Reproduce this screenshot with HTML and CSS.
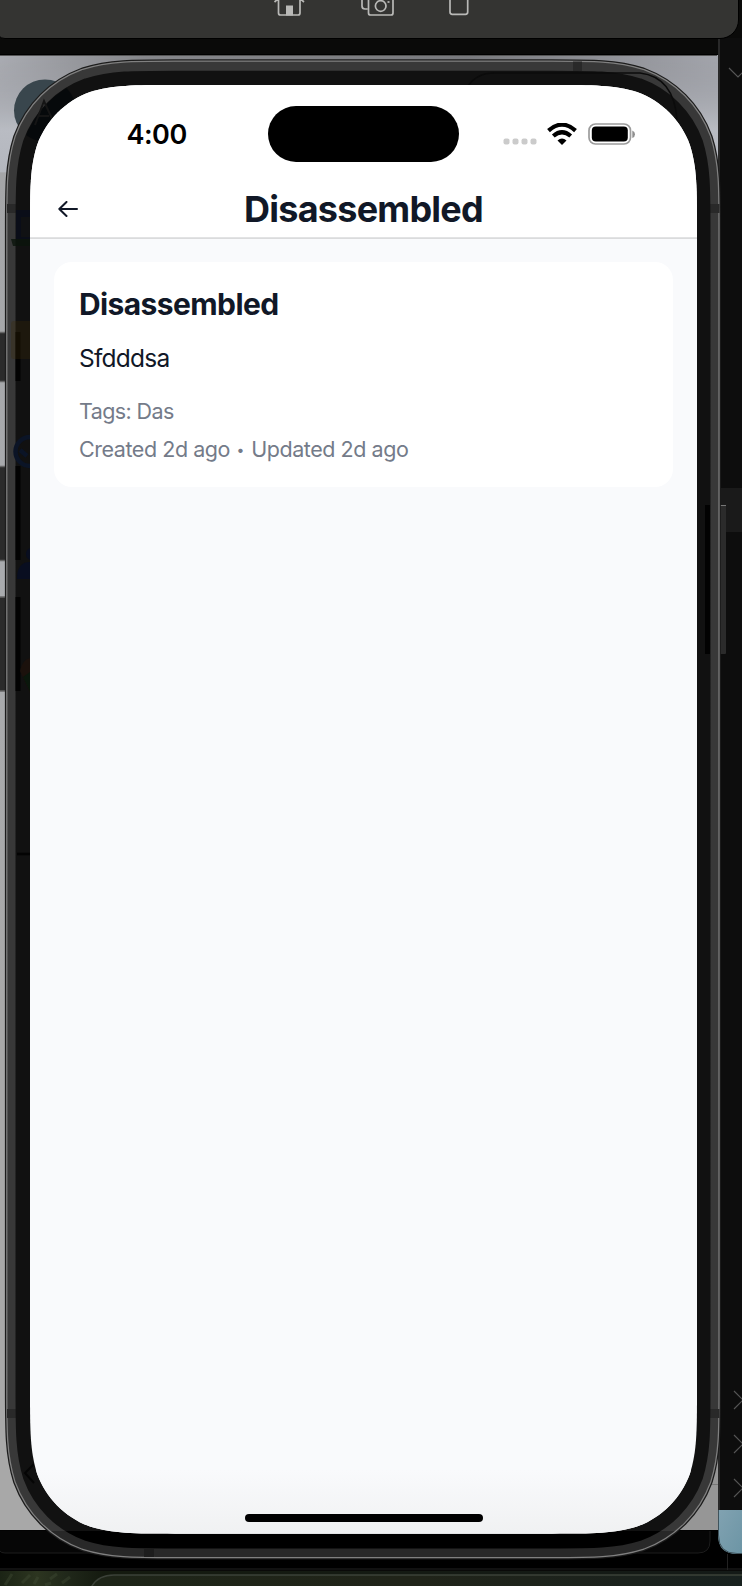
FILE: index.html
```html
<!DOCTYPE html>
<html lang="en">
<head>
<meta charset="utf-8">
<title>Disassembled</title>
<link rel="stylesheet" href="styles.css">
</head>
<body>
<div class="desktop">
  <svg class="backdrop" width="742" height="1586" viewBox="0 0 742 1586" aria-hidden="true">
    <defs>
      <linearGradient id="wall" x2="0" y2="1"><stop offset="0" stop-color="#929399"/><stop offset=".05" stop-color="#b9bcc3"/><stop offset=".079" stop-color="#b4b7be"/><stop offset=".08" stop-color="#a4a5a7"/><stop offset=".35" stop-color="#a9abae"/><stop offset=".65" stop-color="#a8a8a8"/><stop offset="1" stop-color="#a8a8a8"/></linearGradient>
      <linearGradient id="top"><stop offset="0" stop-color="#aaacb2"/><stop offset=".2" stop-color="#85868a"/><stop offset=".65" stop-color="#77787c"/><stop offset="1" stop-color="#a3a5ac"/></linearGradient>
      <linearGradient id="fadeDown" x2="0" y2="1"><stop offset="0" stop-color="#fff"/><stop offset="1" stop-color="#000"/></linearGradient>
      <mask id="topMask"><rect y="55" width="718" height="75" fill="url(#fadeDown)"/></mask>
      <linearGradient id="ring" gradientUnits="userSpaceOnUse" x1="0" y1="0" x2="0" y2="1586"><stop offset=".9647" stop-color="#383838"/><stop offset=".9647" stop-color="#282828"/></linearGradient>
      <linearGradient id="bezel" gradientUnits="userSpaceOnUse" x1="0" y1="0" x2="0" y2="1586"><stop offset=".9647" stop-color="#111"/><stop offset=".9647" stop-color="#000"/></linearGradient>
      <linearGradient id="grass"><stop offset="0" stop-color="#1b2415"/><stop offset=".05" stop-color="#2c3520"/><stop offset=".09" stop-color="#20281a"/><stop offset=".14" stop-color="#141a0f"/><stop offset="1" stop-color="#141a17"/></linearGradient>
      <linearGradient id="glass"><stop offset="0" stop-color="#1e2518"/><stop offset=".5" stop-color="#202419"/><stop offset="1" stop-color="#18211f"/></linearGradient>
      <linearGradient id="blue" x2="1" y2="1"><stop offset="0" stop-color="#81a2b1"/><stop offset="1" stop-color="#6c95a5"/></linearGradient>
      <linearGradient id="fade" gradientUnits="userSpaceOnUse" x1="0" y1="1470" x2="0" y2="1534"><stop offset="0" stop-color="#f9fafc"/><stop offset="1" stop-color="#f0f1f2"/></linearGradient>
      <path id="outline" d="M175 85H552C593.6 85 614.5 85 637 92.1C661.6 101.1 680.9 120.4 689.9 145C697 167.5 697 188.4 697 230V1388.7C697 1430.3 697 1451.2 689.9 1473.7C680.9 1498.3 661.6 1517.6 637 1526.6C614.5 1533.7 593.6 1533.7 552 1533.7H175C133.4 1533.7 112.5 1533.7 90 1526.6C65.4 1517.6 46.1 1498.3 37.1 1473.7C30 1451.2 30 1430.3 30 1388.7V230C30 188.4 30 167.5 37.1 145C46.1 120.4 65.4 101.1 90 92.1C112.5 85 133.4 85 175 85Z"/>
      <clipPath id="screen"><use href="#outline"/></clipPath>
      <clipPath id="avatar"><circle cx="45" cy="110.500" r="31"/></clipPath>
    </defs>
    <rect width="742" height="1586" fill="#0a0a09"/>
    <rect y="55" width="718" height="1475" fill="url(#wall)"/>
    <rect y="55" width="718" height="75" fill="url(#top)" mask="url(#topMask)"/>
    <rect x="640" y="1400" width="78" height="130" fill="#969696"/>
    <path d="M640 1484.500H718" stroke="#777"/>
    <path d="M0 54.500H718" stroke="#000"/><path d="M0 55.500H717" stroke="#555"/>

    <!-- right-hand window edge -->
    <rect x="718" y="38" width="24" height="1532" fill="#0d0d0d"/>
    <path d="M719 38V1530" stroke="#333" stroke-width="1.500"/>
    <rect x="721" y="488" width="21" height="44" fill="#1a1a1a"/>
    <path d="M729 68l9 9 9-9M734 1391l9 9-9 9M734 1435l9 9-9 9M734 1479l9 9-9 9" fill="none" stroke="#555" stroke-width="1.200"/>
    <!-- toolbar -->
    <path d="M-1-1H738.500V20A18.500 18.500 0 0 1 720 38.500H5Q1 38.500-1 36Z" fill="#343432" stroke="#000"/>
    <g fill="none" stroke="#b9b9b7" stroke-width="1.700">
      <path d="M274.500 2L279-2M304 2L299.500-2M278.500-2V13Q278.500 15 280.500 15H298Q300 15 300 13V-2"/>
      <path d="M286 15.500V5.500H293V15.500Z" fill="#b9b9b7" stroke="none"/>
      <path d="M362-2V6Q362 9 365 9H367.500M368.500-2V13Q368.500 15 370.500 15H391Q393 15 393 13V-2"/>
      <circle cx="380.700" cy="6" r="5.300"/><path d="M387.500 2H389.500"/>
      <path d="M450-2V12Q450 14.300 452.300 14.300H465.500Q467.700 14.300 467.700 12V-2"/>
    </g>
    <!-- desktop strip under the device -->
    <rect y="1530" width="742" height="40" fill="#000"/>
    <path d="M0 1530.500H710V1541Q710 1553 698 1553H5Q1 1553 0 1551Z" fill="#060606"/>
    <path d="M710 1531V1541Q710 1553 698 1553H5Q1 1553 0 1551" fill="none" stroke="#1c1c1c"/>
    <path d="M0 1569H742M727.500 1554V1570" stroke="#222"/>
    <rect y="1571" width="742" height="15" fill="url(#grass)"/>
    <g stroke="#46523a" stroke-width="3" opacity=".35"><path d="M5 1585L12 1574M22 1583L30 1575M38 1577L34 1584M50 1579L57 1574M45 1585L51 1583M62 1583L70 1577"/></g>
    <path d="M90 1590Q96 1575 114 1575H744V1590Z" fill="url(#glass)" stroke="#3b4138" stroke-width="1.500"/>
    <path d="M718 1510H742V1554H737Q718 1554 718 1535Z" fill="url(#blue)"/>
    <path d="M718.500 1510V1535Q718.500 1553.500 737 1553.500H742" fill="none" stroke="#3f535c"/>
    <!-- avatar and side buttons -->
    <circle cx="45" cy="110.500" r="31" fill="#39464d"/>
    <g fill="#2b2b2b" stroke="#666" stroke-width="1.500">
      <rect x="-5" y="332.500" width="13" height="49"/><rect x="-5" y="466.500" width="13" height="94"/><rect x="-5" y="597" width="13" height="94"/>
    </g>
    <rect x="716" y="505" width="10" height="149" rx="1" fill="#2b2b2b"/><path d="M720 505.500H726" stroke="#777"/>
    <!-- device -->
    <g fill="none">
      <g transform="matrix(1 0 0 1.0016 -.6 -1.3)">
        <use href="#outline" stroke="#1c1c1c" stroke-width="49"/>
        <use href="#outline" stroke="#808080" stroke-width="46.500"/>
        <use href="#outline" stroke="url(#ring)" stroke-width="44"/>
      </g>
      <path d="M577.500 61.500V71M7 208.500H16M710 208.500H719.500M7 1413.500H16M710 1413.500H719.500" stroke="#292929" stroke-width="9"/>
      <path d="M149 1549V1557" stroke="#1d1d1d" stroke-width="10"/>
      <use href="#outline" stroke="url(#bezel)" stroke-width="28" transform="matrix(1 0 0 1.0008 -.5 -.4)"/>
      <g clip-path="url(#avatar)"><use href="#outline" stroke="#000508" stroke-width="28" opacity=".6"/></g>
      <path d="M468 86Q477 73 494 73H640Q674 77 677 120" stroke="#0b0b0b" stroke-width="1.500"/>
      <path d="M35 125L44 101L53 121M39 116H49" stroke="#151515" stroke-width="2"/>
      <path d="M18 332V381M18 466V560M18 597V691M707.500 505V654" stroke="#020202" stroke-width="5"/>
      <path d="M17 854H30" stroke="#030303" stroke-width="2.500"/>
      <path d="M34 1464L25 1473L34 1483" stroke="#050505" stroke-width="2"/>
    </g>
    <path d="M16 210H30V239H16Z" fill="#0a0d18"/><path d="M21 217H30V237H21Z" fill="#101113"/><path d="M11 239H30V246H13Z" fill="#0a140b" opacity=".8"/>
    <path d="M11 324Q11 321 14 321H30V359H14Q11 359 11 356Z" fill="#3d2c08" opacity=".3"/>
    <path d="M30 437A14.500 14.500 0 0 0 30 466M20 450L27 456" fill="none" stroke="#0b1426" stroke-width="4.500"/>
    <path d="M30 548a6.500 6.500 0 0 0 0 12M17 579Q17 562 30 562V579Z" fill="#090e20"/>
    <path d="M30 658Q22 660 20 671L30 693Z" fill="#1b110c"/><path d="M23 677L30 672V692Z" fill="#0a170c"/>
    <g clip-path="url(#screen)">
      <rect x="30" y="85" width="667" height="1449" fill="#f9fafc"/>
      <rect x="30" y="1470" width="667" height="64" fill="url(#fade)"/>
      <rect x="30" y="85" width="667" height="153" fill="#fff"/>
      <rect x="30" y="237.300" width="667" height="1.600" fill="#d6d7d9"/>
    </g>
  </svg>

  <main class="screen">
    <div class="status-bar">
      <span class="time">4:00</span>
      <span class="island"></span>
      <svg class="indicators" width="134" height="24" viewBox="0 0 134 24" aria-hidden="true">
        <g fill="#cbcbcb"><rect x=".5" y="15.500" width="6" height="6" rx="2"/><rect x="9.500" y="15.500" width="6" height="6" rx="2"/><rect x="18.500" y="15.500" width="6" height="6" rx="2"/><rect x="27.500" y="15.500" width="6" height="6" rx="2"/></g>
        <g fill="none" stroke="#000" stroke-width="4.200"><path d="M45.500 7.600Q59-4.300 72.500 7.600"/><path d="M50.300 13Q59 5.600 67.700 13"/></g>
        <path d="M54.500 17.500Q59 13.700 63.500 17.500L59 22Z"/>
        <rect x="86" y="1" width="41.500" height="20" rx="6.500" fill="none" stroke="#9c9c9c" stroke-width="1.700"/>
        <rect x="88.800" y="3.500" width="36" height="15" rx="4"/>
        <path d="M129.300 7.500Q132 8.500 132 11.200Q132 14 129.300 15Z" fill="#8f8f8f"/>
      </svg>
    </div>
    <header class="nav">
      <svg class="back" width="20" height="16" viewBox="0 0 20 16" aria-hidden="true"><path d="M19 8H1.300M8.500 1L1.300 8L8.500 15" fill="none" stroke="#111827" stroke-width="2" stroke-linecap="round" stroke-linejoin="round"/></svg>
      <h1 class="nav-title">Disassembled</h1>
    </header>
    <section class="content">
      <article class="card">
        <h2 class="card-title">Disassembled</h2>
        <p class="card-text">Sfdddsa</p>
        <p class="meta tags">Tags: Das</p>
        <p class="meta dates">Created 2d ago <span class="dot">•</span> Updated 2d ago</p>
      </article>
    </section>
    <div class="home-indicator"></div>
  </main>
</div>
</body>
</html>
```
FILE: styles.css
```css
* { box-sizing: border-box; }
body { margin: 0; background: #0a0a09; font-family: Inter, "Liberation Sans", sans-serif; color: #111827; }
h1, h2, p { margin: 0; white-space: nowrap; }
.desktop { position: relative; width: 742px; height: 1586px; overflow: hidden; padding: 85px 45px 52px 30px; }
.backdrop { position: absolute; inset: 0; display: block; }
.screen { position: relative; display: flex; flex-direction: column; width: 667px; height: 1449px; }
.status-bar { display: grid; grid-template-columns: 238px 190.5px 1fr; height: 96px; padding-top: 21px; }
.time { padding: 11px 0 0 96.5px; font-size: 27px; line-height: 36px; font-weight: 600; color: #000; letter-spacing: -0.5px; }
.island { height: 56px; border-radius: 28px; background: #000; }
.indicators { margin: 17px 0 0 44.5px; }
.nav { display: grid; grid-template-columns: 1fr auto 1fr; align-items: center; height: 56px; padding: 0 28px; }
.nav-title { margin-top: -1px; font-size: 36px; line-height: 44px; font-weight: 700; letter-spacing: -0.75px; }
.content { flex: 1; padding: 25px 24px 0; }
.card { height: 224.5px; padding: 24px 25px; border-radius: 18px; background: #fff; }
.card-title { font-size: 30px; line-height: 36px; font-weight: 700; letter-spacing: -0.6px; }
.card-text { margin-top: 21px; font-size: 24.5px; line-height: 30px; letter-spacing: -0.75px; }
.meta { font-size: 21.5px; line-height: 28px; color: #747b89; letter-spacing: -0.45px; }
.tags { margin-top: 24px; letter-spacing: -0.6px; }
.dates { margin-top: 10px; }
.dot { display: inline-block; width: 8px; margin: 0 1px; font-size: 14px; vertical-align: 2px; line-height: 1; }
.home-indicator { align-self: center; width: 238px; height: 8px; margin: 0 0 12px 1px; border-radius: 4px; background: #000; }
```
